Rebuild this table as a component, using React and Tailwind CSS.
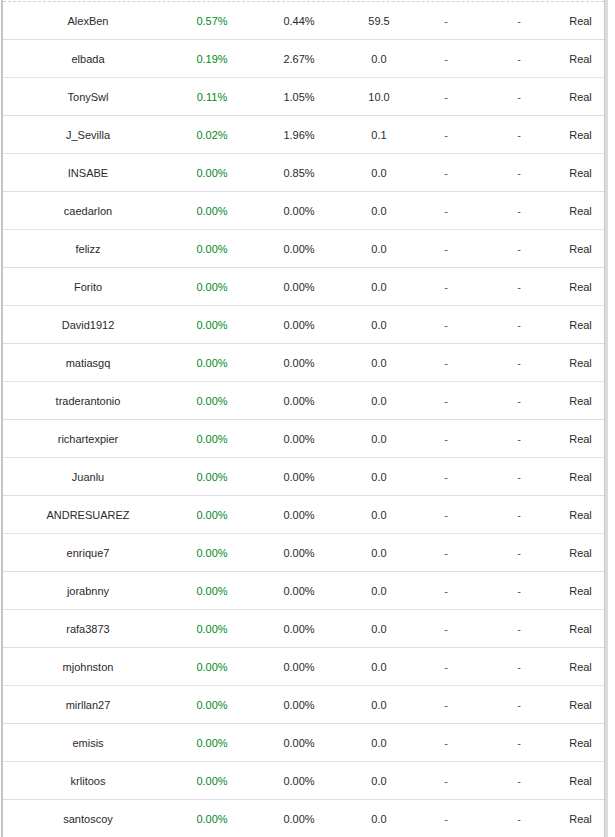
import React from "react";

const rows = [
  ["AlexBen", "0.57%", "0.44%", "59.5"],
  ["elbada", "0.19%", "2.67%", "0.0"],
  ["TonySwl", "0.11%", "1.05%", "10.0"],
  ["J_Sevilla", "0.02%", "1.96%", "0.1"],
  ["INSABE", "0.00%", "0.85%", "0.0"],
  ["caedarlon", "0.00%", "0.00%", "0.0"],
  ["felizz", "0.00%", "0.00%", "0.0"],
  ["Forito", "0.00%", "0.00%", "0.0"],
  ["David1912", "0.00%", "0.00%", "0.0"],
  ["matiasgq", "0.00%", "0.00%", "0.0"],
  ["traderantonio", "0.00%", "0.00%", "0.0"],
  ["richartexpier", "0.00%", "0.00%", "0.0"],
  ["Juanlu", "0.00%", "0.00%", "0.0"],
  ["ANDRESUAREZ", "0.00%", "0.00%", "0.0"],
  ["enrique7", "0.00%", "0.00%", "0.0"],
  ["jorabnny", "0.00%", "0.00%", "0.0"],
  ["rafa3873", "0.00%", "0.00%", "0.0"],
  ["mjohnston", "0.00%", "0.00%", "0.0"],
  ["mirllan27", "0.00%", "0.00%", "0.0"],
  ["emisis", "0.00%", "0.00%", "0.0"],
  ["krlitoos", "0.00%", "0.00%", "0.0"],
  ["santoscoy", "0.00%", "0.00%", "0.0"],
];

export default function App() {
  return (
    <div className="w-[615px] h-[837px] overflow-hidden bg-white flex text-[11px] text-[#2a2a2a]" style={{ fontFamily: '"Liberation Sans", Arial, sans-serif' }}>
      <div className="w-px shrink-0" />
      <div className="w-[2px] shrink-0 bg-[#c4c4c4]" />
      <div className="w-[601px] shrink-0 pt-px">
        {rows.map((r, i) => (
          <div
            key={i}
            className={`grid grid-cols-[170px_78px_96px_64px_70px_76px_47px] h-[38px] pt-[2px] items-center border-t ${
              i === 0 ? "border-dashed border-[#d0d0d0]" : i % 2 === 0 ? "border-[#eadff0]" : "border-[#dedbe4]"
            }`}
          >
            <div className="text-center">{r[0]}</div>
            <div className="text-center text-[#008a1e]">{r[1]}</div>
            <div className="text-center">{r[2]}</div>
            <div className="text-center">{r[3]}</div>
            <div className="text-center text-[#555]">-</div>
            <div className="text-center text-[#555]">-</div>
            <div className="text-center">Real</div>
          </div>
        ))}
      </div>
      <div className="w-[4px] shrink-0 bg-[#dcdcdc] border-l border-[#c8c8c8]" />
    </div>
  );
}
